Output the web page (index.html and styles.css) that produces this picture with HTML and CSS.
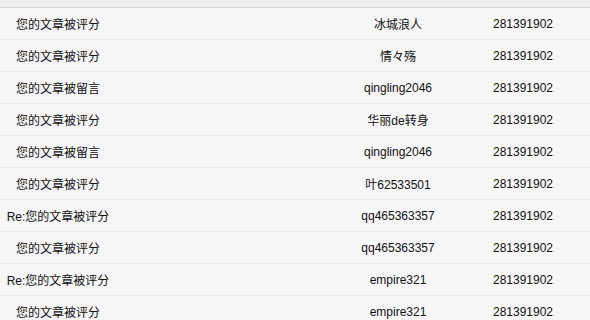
FILE: index.html
```html
<!DOCTYPE html>
<html lang="zh-CN">
<head>
<meta charset="utf-8">
<title>消息列表</title>
<link rel="stylesheet" href="styles.css">
</head>
<body>
<div class="list">
  <div class="head"></div>
  <div class="row"><span class="c1">您的文章被评分</span><span class="gap"></span><span class="c2">冰城浪人</span><span class="c3">281391902</span></div>
  <div class="row"><span class="c1">您的文章被评分</span><span class="gap"></span><span class="c2">情々殇</span><span class="c3">281391902</span></div>
  <div class="row"><span class="c1">您的文章被留言</span><span class="gap"></span><span class="c2">qingling2046</span><span class="c3">281391902</span></div>
  <div class="row"><span class="c1">您的文章被评分</span><span class="gap"></span><span class="c2">华丽de转身</span><span class="c3">281391902</span></div>
  <div class="row"><span class="c1">您的文章被留言</span><span class="gap"></span><span class="c2">qingling2046</span><span class="c3">281391902</span></div>
  <div class="row"><span class="c1">您的文章被评分</span><span class="gap"></span><span class="c2">叶62533501</span><span class="c3">281391902</span></div>
  <div class="row"><span class="c1">Re:您的文章被评分</span><span class="gap"></span><span class="c2">qq465363357</span><span class="c3">281391902</span></div>
  <div class="row"><span class="c1">您的文章被评分</span><span class="gap"></span><span class="c2">qq465363357</span><span class="c3">281391902</span></div>
  <div class="row"><span class="c1">Re:您的文章被评分</span><span class="gap"></span><span class="c2">empire321</span><span class="c3">281391902</span></div>
  <div class="row"><span class="c1">您的文章被评分</span><span class="gap"></span><span class="c2">empire321</span><span class="c3">281391902</span></div>
</div>
</body>
</html>
```
FILE: styles.css
```css
html, body {
  margin: 0;
  padding: 0;
  background: #f6f6f6;
}
body {
  font-family: "Liberation Sans", "Noto Sans CJK SC", sans-serif;
  font-size: 12px;
  color: #111;
  overflow: hidden;
}
.list {
  width: 590px;
}
.head {
  height: 7px;
  background: #efefef;
  border-bottom: 1px solid #d4d4d4;
}
.row {
  display: grid;
  grid-template-columns: 116px 220px 124px 126px 4px;
  height: 31px;
  align-items: center;
  border-bottom: 1px solid #e7e7e7;
  background: #f6f6f6;
}
.c1, .c2, .c3 {
  text-align: center;
  white-space: nowrap;
}
```
